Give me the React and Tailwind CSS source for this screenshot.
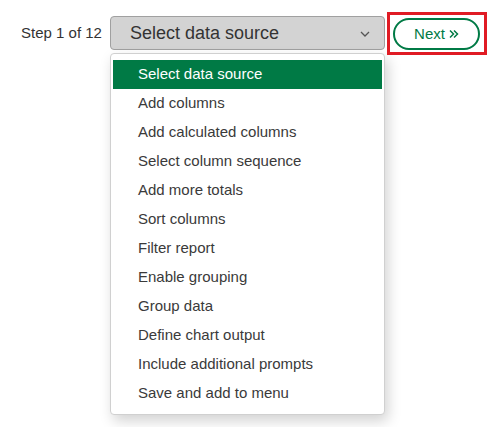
import React from "react";

const items = [
  "Select data source",
  "Add columns",
  "Add calculated columns",
  "Select column sequence",
  "Add more totals",
  "Sort columns",
  "Filter report",
  "Enable grouping",
  "Group data",
  "Define chart output",
  "Include additional prompts",
  "Save and add to menu",
];

export default function App() {
  return (
    <div className="w-[500px] h-[427px] bg-white font-['Liberation_Sans',Arial,sans-serif] text-[#333]">
      <div className="flex items-start pt-[16px] pl-[21px]">
        <div className="w-[89px] h-[34px] flex items-center text-[15px] text-[#333]">Step 1 of 12</div>
        <div className="flex flex-col w-[275px]">
          <div className="h-[34px] flex items-center justify-between bg-[#d3d3d3] border border-[#a0a0a0] rounded-[4px] pl-[19px] pr-[14px]">
            <span className="text-[18px] text-[#333]">Select data source</span>
            <svg width="10" height="6" viewBox="0 0 10 6" fill="none" className="mt-[1px]">
              <path d="M1 1l4 4 4-4" stroke="#555" strokeWidth="1.3" />
            </svg>
          </div>
          <div className="mt-[3px] bg-white border border-[#d0d0d0] rounded-[4px] shadow-[3px_6px_14px_rgba(0,0,0,0.18)] py-[6px] px-[2px]">
            {items.map((t, i) => (
              <div
                key={t}
                className={
                  i === 0
                    ? "h-[29px] flex items-center pl-[25px] text-[15px] bg-[#007a45] text-white"
                    : "h-[29px] flex items-center pl-[25px] text-[15px] text-[#3a3a3a]"
                }
              >
                {t}
              </div>
            ))}
          </div>
        </div>
        <div className="ml-[2px] mt-[-4px] border-[3px] border-[#e01b24] pt-[3px] pb-[2px] pl-[3px] pr-[4px] w-[100px] h-[43px]">
          <div className="h-full rounded-full border-2 border-[#007a45] flex items-center justify-center text-[15px] text-[#007a45]">
            <span>Next</span>
            <svg width="10" height="10" viewBox="0 0 10 10" fill="none" className="ml-[4px]">
              <path d="M1 1.5l3.5 3.5L1 8.5M5 1.5l3.5 3.5L5 8.5" stroke="#007a45" strokeWidth="1.5" />
            </svg>
          </div>
        </div>
      </div>
    </div>
  );
}
